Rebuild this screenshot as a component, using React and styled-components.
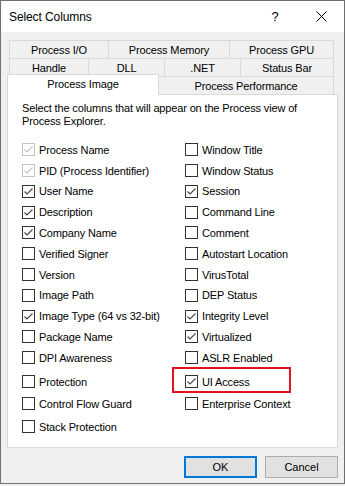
import styled, { createGlobalStyle } from "styled-components"

const GlobalStyle = createGlobalStyle`
    html, body {
        margin: 0;
        padding: 0;
        background: #f0f0f0;
    }
    body {
        font-family: "Liberation Sans", Arial, sans-serif;
        font-size: 11px;
        color: #000;
    }
`;

const Window = styled.div`
    width: 345px;
    height: 484px;
    box-sizing: border-box;
    border: 1px solid #6f6f6f;
    background: #f0f0f0;
    display: flex;
    flex-direction: column;
`;

const TitleBar = styled.div`
    height: 31px;
    background: #fff;
    display: flex;
    align-items: center;
`;

const Title = styled.div`
    flex: 1;
    padding-left: 8px;
    font-size: 12px;
    letter-spacing: -0.1px;
`;

const CaptionButton = styled.div`
    width: 46px;
    height: 31px;
    display: flex;
    align-items: center;
    justify-content: center;
    font-size: 13px;
`;

const Body = styled.div`
    flex: 1;
    display: flex;
    flex-direction: column;
    padding: 8px 6px 0 6px;
`;

const TabRow = styled.div`
    display: flex;
    align-items: flex-start;
    height: 18px;
    padding-left: ${p => p.indent}px;
`;

const Tab = styled.div`
    box-sizing: border-box;
    width: ${p => p.width}px;
    height: 18px;
    border-top: 1px solid #d9d9d9;
    border-left: ${p => (p.noLeft ? "none" : "1px solid #d9d9d9")};
    border-right: ${p => (p.last ? "1px solid #d9d9d9" : "none")};
    background: #f0f0f0;
    display: flex;
    align-items: center;
    justify-content: center;
    letter-spacing: -0.15px;
    white-space: nowrap;
`;

const ActiveTab = styled(Tab)`
    position: relative;
    z-index: 1;
    height: 21px;
    margin-top: -2px;
    border-right: 1px solid #d9d9d9;
    background: #fff;
    padding-bottom: 2px;
`;

const Panel = styled.div`
    height: 354px;
    box-sizing: border-box;
    border: 1px solid #d9d9d9;
    background: #fff;
    padding: 7px 0 0 14px;
`;

const Description = styled.p`
    margin: 0;
    width: 300px;
    line-height: 13px;
    letter-spacing: -0.15px;
`;

const Grid = styled.div`
    margin-top: 9px;
    display: grid;
    grid-template-columns: 163px 1fr;
    grid-template-rows: repeat(11, 20.8px) 24px 22px 23px;
    grid-auto-flow: column;
    align-items: end;
`;

const Item = styled.label`
    position: relative;
    height: 16px;
    display: flex;
    align-items: center;
    gap: 4px;
    letter-spacing: -0.15px;
    white-space: nowrap;
    ${p => p.highlighted && `
        &::after {
            content: "";
            position: absolute;
            left: -13px;
            top: -7px;
            width: 115px;
            height: 22px;
            border: 2px solid #e81123;
        }
    `}
`;

const Box = styled.span`
    box-sizing: border-box;
    width: 13px;
    height: 13px;
    flex: none;
    border: 1px solid ${p => (p.disabled ? "#c4c4c4" : "#333")};
    background: #fff;
    display: flex;
`;

const Footer = styled.div`
    display: flex;
    justify-content: flex-end;
    gap: 8px;
    margin-top: 8px;
`;

const Button = styled.button`
    box-sizing: border-box;
    width: 73px;
    height: 22px;
    padding: 0;
    background: #e1e1e1;
    border: ${p => (p.primary ? "2px solid #0078d7" : "1px solid #adadad")};
    font-family: "Liberation Sans", Arial, sans-serif;
    font-size: 11px;
    color: #000;
`;

const Check = ({ checked, disabled }) => (
  <Box disabled={disabled}>
    {checked && (
      <svg width="11" height="11" viewBox="0 0 11 11">
        <polyline
          points="1.5,5.5 4,8 9.5,2.5"
          fill="none"
          stroke={disabled ? "#c4c4c4" : "#444"}
          strokeWidth="1.1"
        />
      </svg>
    )}
  </Box>
)

const left = [
  ["Process Name", true, true],
  ["PID (Process Identifier)", true, true],
  ["User Name", true],
  ["Description", true],
  ["Company Name", true],
  ["Verified Signer", false],
  ["Version", false],
  ["Image Path", false],
  ["Image Type (64 vs 32-bit)", true],
  ["Package Name", false],
  ["DPI Awareness", false],
  ["Protection", false],
  ["Control Flow Guard", false],
  ["Stack Protection", false],
]

const right = [
  ["Window Title", false],
  ["Window Status", false],
  ["Session", true],
  ["Command Line", false],
  ["Comment", false],
  ["Autostart Location", false],
  ["VirusTotal", false],
  ["DEP Status", false],
  ["Integrity Level", true],
  ["Virtualized", true],
  ["ASLR Enabled", false],
  ["UI Access", true],
  ["Enterprise Context", false],
]

const App = () => {
  const renderItem = ([name, checked, disabled]) => (
    <Item key={name} highlighted={name === "UI Access"}>
      <Check checked={checked} disabled={disabled} />
      {name}
    </Item>
  )

  return (
    <>
      <GlobalStyle />
      <Window>
        <TitleBar>
          <Title>Select Columns</Title>
          <CaptionButton>?</CaptionButton>
          <CaptionButton>
            <svg width="11" height="11" viewBox="0 0 11 11">
              <path d="M0.5 0.5 L10.5 10.5 M10.5 0.5 L0.5 10.5" stroke="#000" strokeWidth="1" />
            </svg>
          </CaptionButton>
        </TitleBar>
        <Body>
          <TabRow indent={2}>
            <Tab width={99}>Process I/O</Tab>
            <Tab width={121}>Process Memory</Tab>
            <Tab width={105} last>Process GPU</Tab>
          </TabRow>
          <TabRow indent={2}>
            <Tab width={79}>Handle</Tab>
            <Tab width={76}>DLL</Tab>
            <Tab width={76}>.NET</Tab>
            <Tab width={94} last>Status Bar</Tab>
          </TabRow>
          <TabRow indent={0}>
            <ActiveTab width={152}>Process Image</ActiveTab>
            <Tab width={175} noLeft last>Process Performance</Tab>
          </TabRow>
          <Panel>
            <Description>
              Select the columns that will appear on the Process view of Process Explorer.
            </Description>
            <Grid>
              {left.map(renderItem)}
              {right.map(renderItem)}
            </Grid>
          </Panel>
          <Footer>
            <Button primary>OK</Button>
            <Button>Cancel</Button>
          </Footer>
        </Body>
      </Window>
    </>
  )
}

export default App
